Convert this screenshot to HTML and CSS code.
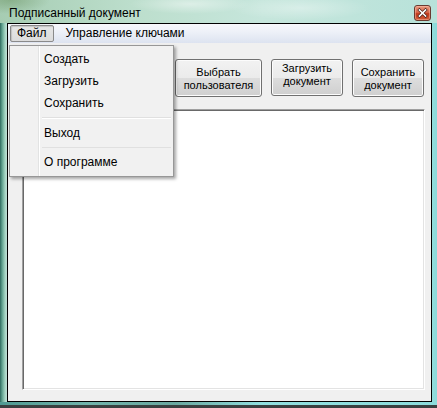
FILE: index.html
```html
<!DOCTYPE html>
<html lang="ru">
<head>
<meta charset="utf-8">
<title>Подписанный документ</title>
<link rel="stylesheet" href="styles.css">
</head>
<body>
<div class="window">
  <div class="titlebar">
    <span class="title">Подписанный документ</span>
    <span class="close">
      <svg width="17" height="16" viewBox="0 0 17 16">
        <path d="M5 4.5 L12 11.5 M12 4.5 L5 11.5" stroke="#4a2018" stroke-width="3.4" stroke-linecap="square"/>
        <path d="M5 4.5 L12 11.5 M12 4.5 L5 11.5" stroke="#ffffff" stroke-width="1.8" stroke-linecap="square"/>
      </svg>
    </span>
  </div>
  <div class="client">
    <div class="menubar">
      <span class="menuitem active">Файл</span>
      <span class="menuitem">Управление ключами</span>
    </div>
    <div class="content">
      <div class="toolbar">
        <button class="btn wide">Выбрать<br>пользователя</button>
        <button class="btn raised">Загрузить<br>документ</button>
        <button class="btn">Сохранить<br>документ</button>
      </div>
      <div class="textarea"></div>
    </div>
  </div>
  <div class="bottomframe"></div>
</div>

<div class="dropdown">
  <div class="dd-item">Создать</div>
  <div class="dd-item">Загрузить</div>
  <div class="dd-item">Сохранить</div>
  <div class="dd-sep"></div>
  <div class="dd-item">Выход</div>
  <div class="dd-sep"></div>
  <div class="dd-item">О программе</div>
</div>
</body>
</html>
```

FILE: styles.css
```css
html, body {
  margin: 0;
  padding: 0;
}
body {
  width: 437px;
  height: 408px;
  overflow: hidden;
  position: relative;
  font-family: "Liberation Sans", Arial, sans-serif;
  background: linear-gradient(90deg, #2f6a5e 0px, #5e9e8c 2px, #8cc4b0 4px, #b8dcd0 6px, #c8e8e0 50%, #a8e0dc 96%, #8adada 100%);
}
.window {
  display: flex;
  flex-direction: column;
  height: 408px;
}
.titlebar {
  height: 23px;
  display: flex;
  align-items: flex-start;
  justify-content: space-between;
  padding: 0 6px 0 9px;
  background:
    radial-gradient(ellipse 60px 10px at 190px 4px, rgba(255,255,255,0.45), rgba(255,255,255,0)),
    radial-gradient(ellipse 70px 12px at 300px 8px, rgba(255,255,255,0.35), rgba(255,255,255,0)),
    radial-gradient(ellipse 40px 14px at 10px 0px, rgba(80,120,60,0.35), rgba(80,120,60,0)),
    linear-gradient(90deg, #a6ccb2 0%, #bcdecc 30%, #c6e6dc 60%, #b8e2da 100%);
}
.title {
  font-size: 12px;
  color: #000;
  margin-top: 6px;
  line-height: 14px;
}
.close {
  width: 17px;
  height: 16px;
  margin-top: 5px;
  border: 1px solid #6a3a30;
  border-radius: 3px;
  box-sizing: border-box;
  display: flex;
  align-items: center;
  justify-content: center;
  background: linear-gradient(180deg, #e89a80 0%, #d8664a 45%, #c03a1c 55%, #d05a38 100%);
  box-shadow: inset 0 0 0 1px rgba(255,200,180,0.45);
}
.close svg {
  display: block;
  width: 15px;
  height: 14px;
}
.client {
  margin: 0 5px 0 7px;
  height: 379px;
  box-sizing: border-box;
  border: 1px solid #000;
  background: #f0f0f0;
  display: flex;
  flex-direction: column;
}
.menubar {
  height: 19px;
  display: flex;
  align-items: center;
  padding-left: 2px;
  gap: 5px;
  background: linear-gradient(180deg, #f6f7fb 0%, #eef1f8 40%, #dde3f0 100%);
  font-size: 12px;
}
.menuitem {
  padding: 1px 6px;
  line-height: 13px;
  border: 1px solid transparent;
}
.menuitem.active {
  border: 1px solid #8a8a8a;
  border-radius: 2px;
  background: linear-gradient(180deg, #e6e6e6 0%, #dcdcdc 100%);
  box-shadow: inset 1px 1px 1px rgba(0,0,0,0.15);
}
.content {
  flex: 1;
  display: flex;
  flex-direction: column;
  padding: 16px 6px 11px 14px;
}
.toolbar {
  display: flex;
  justify-content: flex-end;
  gap: 9px;
  height: 38px;
  padding-right: 1px;
}
.btn {
  width: 72px;
  height: 38px;
  font-family: "Liberation Sans", Arial, sans-serif;
  font-size: 11px;
  line-height: 13px;
  color: #000;
  border: 1px solid #707070;
  border-radius: 3px;
  background: linear-gradient(180deg, #f2f2f2 0%, #ebebeb 50%, #dddddd 51%, #cfcfcf 100%);
  box-shadow: inset 0 0 0 1px #fcfcfc;
  padding: 0;
  padding-top: 1px;
}
.btn.wide {
  width: 87px;
}
.btn.raised {
  height: 37px;
  padding-top: 0;
  padding-bottom: 6px;
}
.textarea {
  margin-top: 12px;
  flex: 1;
  background: #fff;
  border: 1px solid;
  border-color: #a0a0a0 #ffffff #ffffff #a0a0a0;
  box-shadow: inset 1px 1px 0 #696969, inset -1px -1px 0 #e3e3e3;
}
.bottomframe {
  flex: 1;
  background: linear-gradient(90deg, #4f9a92 0%, #70b4ac 20%, #6aa8a0 40%, #90e0e0 60%, #8cdcdc 100%);
  border-bottom: 3px solid #3a4040;
}
.dropdown {
  position: absolute;
  left: 9px;
  top: 45px;
  width: 165px;
  height: 132px;
  box-sizing: border-box;
  border: 1px solid #979797;
  background:
    linear-gradient(90deg, transparent 28px, #e2e3e3 28px, #e2e3e3 29px, #ffffff 29px, #ffffff 30px, transparent 30px),
    #f1f1f1;
  box-shadow: 2px 2px 3px rgba(0,0,0,0.35);
  padding: 2px 2px 3px 2px;
  font-size: 12px;
  display: flex;
  flex-direction: column;
}
.dd-item {
  height: 22px;
  line-height: 22px;
  padding-left: 32px;
  color: #000;
}
.dd-sep {
  height: 2px;
  margin: 3px 0 3px 30px;
  background: linear-gradient(180deg, #e0e0e0 0, #e0e0e0 1px, #ffffff 1px);
}
```
